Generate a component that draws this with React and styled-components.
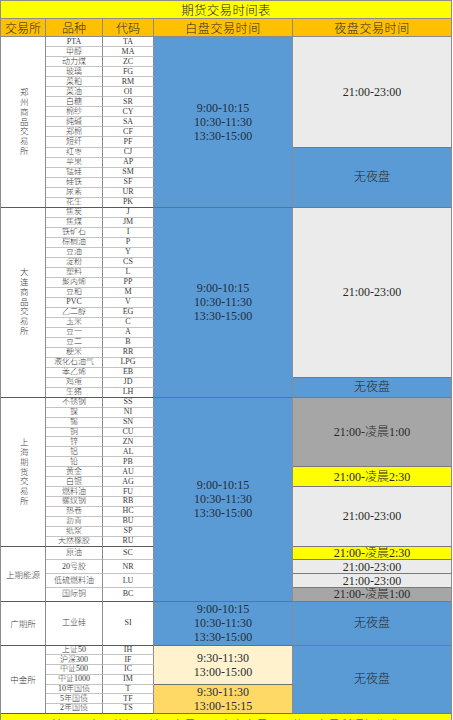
import React from "react";
import styled, { createGlobalStyle, css } from "styled-components";

const Global = createGlobalStyle`
  html, body { margin: 0; padding: 0; background: #ffffff; }
  body { font-family: "Liberation Serif", "Noto Sans CJK SC", serif; color: #222; }
`;

const FONT = `"Liberation Serif", "Noto Sans CJK SC", serif`;

const heights = [
  ...Array(17).fill(10.06),
  ...Array(19).fill(10),
  ...Array(15).fill(9.93),
  ...Array(4).fill(13.75),
  44,
  ...Array(7).fill(9.72),
];
const ROWS = `18px 18px ${heights.map((h) => `${h}px`).join(" ")} 24px`;
const FIRST = 3;

const Sheet = styled.div`
  display: grid;
  grid-template-columns: 45px 57px 51px 139px 159px;
  grid-template-rows: ${ROWS};
  width: 452px;
  border-left: 1px solid #8c8c8c;
  border-top: 1px solid #8c8c8c;
  box-sizing: border-box;
  font-family: ${FONT};
  font-weight: 300;
  overflow: hidden;
`;

const base = css`
  box-sizing: border-box;
  display: flex;
  align-items: center;
  justify-content: center;
  text-align: center;
  border-right: 1px solid #8c8c8c;
  border-bottom: 1px solid #8c8c8c;
  overflow: hidden;
  white-space: nowrap;
  grid-row: ${(p) => p.$row} / span ${(p) => p.$span || 1};
`;

const TitleCell = styled.div`
  ${base};
  grid-column: 1 / span 5;
  background: #ffff00;
  font-size: 12.5px;
  color: #1a1a1a;
  letter-spacing: 0.3px;
`;

const HeadCell = styled.div`
  ${base};
  grid-column: ${(p) => p.$col};
  background: #ffc000;
  font-size: 12px;
  color: #2a2a2a;
  letter-spacing: ${(p) => (p.$wide ? "0.6px" : "0")};
`;

const ExchangeCell = styled.div`
  ${base};
  grid-column: 1;
  background: #fff;
  border-bottom-color: #5a5a5a;
  font-size: 8.5px;
  color: #3a3a3a;
`;

const VerticalName = styled.span`
  writing-mode: vertical-rl;
  text-orientation: upright;
  letter-spacing: 1.2px;
  font-size: 8.5px;
  line-height: 1;
`;

const ProductCell = styled.div`
  ${base};
  grid-column: ${(p) => p.$col};
  background: #fff;
  font-size: 8px;
  line-height: 1;
  color: #3a3a3a;
  border-bottom-color: ${(p) => (p.$end ? "#5a5a5a" : "#c4c4c4")};
`;

const palette = {
  blue: "#5b9bd5",
  light: "#ebebeb",
  dark: "#a6a6a6",
  yellow: "#ffff00",
  cream: "#fff2cc",
  gold: "#ffd966",
};

const DayCell = styled.div`
  ${base};
  grid-column: 4;
  flex-direction: column;
  background: ${(p) => palette[p.$tone]};
  font-size: 12px;
  line-height: 14px;
  color: #1f2d3d;
  border-bottom-color: #6f6f6f;
`;

const NightCell = styled.div`
  ${base};
  grid-column: 5;
  background: ${(p) => palette[p.$tone]};
  font-size: 12px;
  line-height: 1;
  color: #2a2a2a;
  border-bottom-color: #7a7a7a;
`;

const Footer = styled.div`
  ${base};
  grid-column: 1 / span 5;
  background: #ffff00;
  align-items: flex-start;
  padding-top: 2px;
  font-size: 12px;
  color: #222;
`;

const groups = [
  {
    name: "郑州商品交易所",
    vertical: true,
    items: [
      ["PTA", "TA"], ["甲醇", "MA"], ["动力煤", "ZC"], ["玻璃", "FG"], ["菜粕", "RM"],
      ["菜油", "OI"], ["白糖", "SR"], ["棉纱", "CY"], ["纯碱", "SA"], ["郑棉", "CF"],
      ["短纤", "PF"], ["红枣", "CJ"], ["苹果", "AP"], ["锰硅", "SM"], ["硅铁", "SF"],
      ["尿素", "UR"], ["花生", "PK"],
    ],
  },
  {
    name: "大连商品交易所",
    vertical: true,
    items: [
      ["焦炭", "J"], ["焦煤", "JM"], ["铁矿石", "I"], ["棕榈油", "P"], ["豆油", "Y"],
      ["淀粉", "CS"], ["塑料", "L"], ["聚丙烯", "PP"], ["豆粕", "M"], ["PVC", "V"],
      ["乙二醇", "EG"], ["玉米", "C"], ["豆一", "A"], ["豆二", "B"], ["粳米", "RR"],
      ["液化石油气", "LPG"], ["苯乙烯", "EB"], ["鸡蛋", "JD"], ["生猪", "LH"],
    ],
  },
  {
    name: "上海期货交易所",
    vertical: true,
    items: [
      ["不锈钢", "SS"], ["镍", "NI"], ["锡", "SN"], ["铜", "CU"], ["锌", "ZN"],
      ["铝", "AL"], ["铅", "PB"], ["黄金", "AU"], ["白银", "AG"], ["燃料油", "FU"],
      ["螺纹钢", "RB"], ["热卷", "HC"], ["沥青", "BU"], ["纸浆", "SP"], ["天然橡胶", "RU"],
    ],
  },
  {
    name: "上期能源",
    items: [["原油", "SC"], ["20号胶", "NR"], ["低硫燃料油", "LU"], ["国际铜", "BC"]],
  },
  { name: "广期所", items: [["工业硅", "SI"]] },
  {
    name: "中金所",
    items: [
      ["上证50", "IH"], ["沪深300", "IF"], ["中证500", "IC"], ["中证1000", "IM"],
      ["10年国债", "T"], ["5年国债", "TF"], ["2年国债", "TS"],
    ],
  },
];

const STD = ["9:00-10:15", "10:30-11:30", "13:30-15:00"];

const day = [
  { span: 17, tone: "blue", lines: STD },
  { span: 19, tone: "blue", lines: STD },
  { span: 19, tone: "blue", lines: STD },
  { span: 1, tone: "blue", lines: STD },
  { span: 4, tone: "cream", lines: ["9:30-11:30", "13:00-15:00"] },
  { span: 3, tone: "gold", lines: ["9:30-11:30", "13:00-15:15"] },
];

const night = [
  { span: 11, tone: "light", text: "21:00-23:00" },
  { span: 6, tone: "blue", text: "无夜盘" },
  { span: 17, tone: "light", text: "21:00-23:00" },
  { span: 2, tone: "blue", text: "无夜盘" },
  { span: 7, tone: "dark", text: "21:00-凌晨1:00" },
  { span: 2, tone: "yellow", text: "21:00-凌晨2:30" },
  { span: 6, tone: "light", text: "21:00-23:00" },
  { span: 1, tone: "yellow", text: "21:00-凌晨2:30" },
  { span: 1, tone: "light", text: "21:00-23:00" },
  { span: 1, tone: "light", text: "21:00-23:00" },
  { span: 1, tone: "dark", text: "21:00-凌晨1:00" },
  { span: 1, tone: "blue", text: "无夜盘" },
  { span: 7, tone: "blue", text: "无夜盘" },
];

function withRows(list) {
  let r = FIRST;
  return list.map((item) => {
    const out = { ...item, row: r };
    r += item.span;
    return out;
  });
}

export default function App() {
  const exchangeCells = [];
  const productCells = [];
  let r = FIRST;
  groups.forEach((g) => {
    exchangeCells.push(
      <ExchangeCell key={g.name} $row={r} $span={g.items.length}>
        {g.vertical ? <VerticalName>{g.name}</VerticalName> : g.name}
      </ExchangeCell>
    );
    g.items.forEach(([name, code], i) => {
      const end = i === g.items.length - 1;
      productCells.push(
        <ProductCell key={`p${r}`} $col={2} $row={r} $end={end}>{name}</ProductCell>,
        <ProductCell key={`c${r}`} $col={3} $row={r} $end={end}>{code}</ProductCell>
      );
      r += 1;
    });
  });
  const footerRow = r;

  return (
    <>
      <Global />
      <Sheet>
        <TitleCell $row={1}>期货交易时间表</TitleCell>
        <HeadCell $row={2} $col={1}>交易所</HeadCell>
        <HeadCell $row={2} $col={2}>品种</HeadCell>
        <HeadCell $row={2} $col={3}>代码</HeadCell>
        <HeadCell $row={2} $col={4} $wide>白盘交易时间</HeadCell>
        <HeadCell $row={2} $col={5} $wide>夜盘交易时间</HeadCell>
        {exchangeCells}
        {productCells}
        {withRows(day).map((d) => (
          <DayCell key={`d${d.row}`} $row={d.row} $span={d.span} $tone={d.tone}>
            {d.lines.map((l) => (
              <span key={l}>{l}</span>
            ))}
          </DayCell>
        ))}
        {withRows(night).map((n) => (
          <NightCell key={`n${n.row}`} $row={n.row} $span={n.span} $tone={n.tone}>
            {n.text}
          </NightCell>
        ))}
        <Footer $row={footerRow}>注：周末及节假日前一交易日无夜盘交易，具体以交易所通知为准</Footer>
      </Sheet>
    </>
  );
}
